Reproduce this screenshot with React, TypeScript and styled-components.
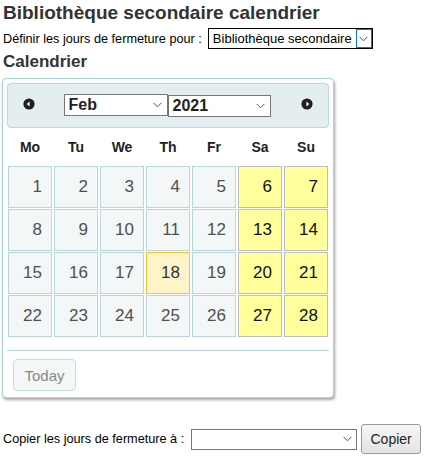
import React from "react";
import styled, { createGlobalStyle } from "styled-components";

const GlobalStyle = createGlobalStyle`
  body {
    margin: 0;
    font-family: "Liberation Sans", Arial, sans-serif;
    color: #333;
    background: #fff;
  }
`;

const Page = styled.div`
  padding: 1px 3px 0 3px;
`;

const Title = styled.h1`
  margin: 0;
  font-size: 19px;
  line-height: 23px;
  font-weight: bold;
  color: #333;
`;

const FormRow = styled.div<{ $top?: number }>`
  display: flex;
  align-items: center;
  margin-top: ${(p) => p.$top ?? 0}px;
  font-size: 12.7px;
  color: #000;
  white-space: nowrap;
`;

const Label = styled.span<{ $gap?: number }>`
  margin-right: ${(p) => p.$gap ?? 4}px;
`;

const FakeSelect = styled.div<{ $width: number; $height: number; $dark?: boolean }>`
  box-sizing: border-box;
  display: flex;
  align-items: stretch;
  flex-shrink: 0;
  width: ${(p) => p.$width}px;
  height: ${(p) => p.$height}px;
  border: 1px solid ${(p) => (p.$dark ? "#000" : "#767676")};
  background: #fff;
  color: #000;
`;

const SelectText = styled.span<{ $bold?: boolean; $size?: number }>`
  flex: 1;
  display: flex;
  align-items: center;
  padding-left: 4px;
  font-size: ${(p) => p.$size ?? 13}px;
  font-weight: ${(p) => (p.$bold ? "bold" : "normal")};
  color: ${(p) => (p.$bold ? "#222" : "#000")};
  white-space: nowrap;
  overflow: hidden;
`;

const ArrowBox = styled.span<{ $focused?: boolean }>`
  box-sizing: border-box;
  width: ${(p) => (p.$focused ? 16 : 18)}px;
  display: flex;
  align-items: center;
  justify-content: center;
  border: ${(p) => (p.$focused ? "1px solid #0078d7" : "none")};
`;

const Chevron = () => (
  <svg width="9" height="6" viewBox="0 0 9 6">
    <path d="M0.5 0.8 L4.5 4.8 L8.5 0.8" fill="none" stroke="#555" strokeWidth="1" />
  </svg>
);

const SubTitle = styled.h2`
  margin: 3px 0 0 0;
  font-size: 17px;
  line-height: 20px;
  font-weight: bold;
  color: #333;
`;

const Picker = styled.div`
  box-sizing: border-box;
  width: 332px;
  margin: 6px 0 0 -1px;
  padding: 4px 4px 6px 4px;
  border: 1px solid #a9d3d8;
  border-radius: 4px;
  background: #fff;
  box-shadow: 1px 2px 3px rgba(0, 0, 0, 0.35);
`;

const Header = styled.div`
  box-sizing: border-box;
  height: 45px;
  display: flex;
  align-items: center;
  padding: 0 15px 0 15px;
  border: 1px solid #b7dade;
  border-radius: 4px;
  background: #e4eef1;
`;

const NavButton = styled.span`
  display: flex;
  width: 12px;
  height: 12px;
  margin-top: -4px;
`;

const SelectGroup = styled.div`
  flex: 1;
  display: flex;
  justify-content: center;
  align-items: flex-start;
  margin-left: -2px;
`;

const YearWrap = styled.div`
  margin-top: 1px;
`;

const NavIcon = ({ dir }: { dir: "prev" | "next" }) => (
  <svg width="12" height="12" viewBox="0 0 12 12">
    <circle cx="6" cy="6" r="5.6" fill="#1f1f1f" />
    {dir === "prev" ? (
      <path d="M3.6 6 L6.6 3.4 L6.6 8.6 Z" fill="#fff" />
    ) : (
      <path d="M8.4 6 L5.4 3.4 L5.4 8.6 Z" fill="#fff" />
    )}
  </svg>
);

const Grid = styled.div`
  display: grid;
  grid-template-columns: repeat(7, 44px);
  column-gap: 2px;
  row-gap: 1px;
  padding: 0 1px;
`;

const DayName = styled.div`
  height: 37px;
  display: flex;
  align-items: center;
  justify-content: center;
  font-size: 14px;
  font-weight: bold;
  color: #222;
`;

type Kind = "normal" | "weekend" | "today";

const Cell = styled.div<{ $kind: Kind }>`
  box-sizing: border-box;
  height: 42px;
  display: flex;
  align-items: center;
  justify-content: flex-end;
  padding-right: 9px;
  font-size: 17px;
  border: 1px solid
    ${(p) =>
      p.$kind === "weekend" ? "#bdbdbd" : p.$kind === "today" ? "#f4c23d" : "#b6d8dc"};
  background: ${(p) =>
    p.$kind === "weekend" ? "#ffff9c" : p.$kind === "today" ? "#fff4c9" : "#f3f7f8"};
  color: ${(p) => (p.$kind === "normal" ? "#4f4f4f" : p.$kind === "today" ? "#333" : "#111")};
`;

const Footer = styled.div`
  margin-top: 13px;
  padding: 8px 0 0 6px;
  border-top: 1px solid #b2d6da;
`;

const TodayButton = styled.button`
  box-sizing: border-box;
  width: 63px;
  height: 32px;
  padding: 0;
  border: 1px solid #c3e0e3;
  border-radius: 4px;
  background: #f3f7f8;
  font-family: "Liberation Sans", Arial, sans-serif;
  font-size: 15px;
  color: #888;
`;

const CopyButton = styled.button`
  box-sizing: border-box;
  width: 61px;
  height: 30px;
  margin-left: 4px;
  padding: 0;
  border: 1px solid #9a9a9a;
  border-radius: 3px;
  background: linear-gradient(#f6f6f6, #e4e4e4);
  font-family: "Liberation Sans", Arial, sans-serif;
  font-size: 14px;
  color: #222;
`;

const dayNames = ["Mo", "Tu", "We", "Th", "Fr", "Sa", "Su"];

const days = Array.from({ length: 28 }, (_, i) => i + 1);

const kindOf = (d: number): Kind => {
  if (d === 18) return "today";
  const col = (d - 1) % 7;
  return col >= 5 ? "weekend" : "normal";
};

export default function App() {
  return (
    <>
      <GlobalStyle />
      <Page>
        <Title>Bibliothèque secondaire calendrier</Title>
        <FormRow $top={4}>
          <Label $gap={6}>Définir les jours de fermeture pour :</Label>
          <FakeSelect $width={165} $height={21} $dark>
            <SelectText>Bibliothèque secondaire</SelectText>
            <ArrowBox $focused>
              <Chevron />
            </ArrowBox>
          </FakeSelect>
        </FormRow>
        <SubTitle>Calendrier</SubTitle>
        <Picker>
          <Header>
            <NavButton>
              <NavIcon dir="prev" />
            </NavButton>
            <SelectGroup>
              <FakeSelect $width={104} $height={22}>
                <SelectText $bold $size={16}>Feb</SelectText>
                <ArrowBox>
                  <Chevron />
                </ArrowBox>
              </FakeSelect>
              <YearWrap>
                <FakeSelect $width={103} $height={22}>
                  <SelectText $bold $size={16}>2021</SelectText>
                  <ArrowBox>
                    <Chevron />
                  </ArrowBox>
                </FakeSelect>
              </YearWrap>
            </SelectGroup>
            <NavButton>
              <NavIcon dir="next" />
            </NavButton>
          </Header>
          <Grid>
            {dayNames.map((n) => (
              <DayName key={n}>{n}</DayName>
            ))}
            {days.map((d) => (
              <Cell key={d} $kind={kindOf(d)}>
                {d}
              </Cell>
            ))}
          </Grid>
          <Footer>
            <TodayButton>Today</TodayButton>
          </Footer>
        </Picker>
        <FormRow $top={26}>
          <Label $gap={7}>Copier les jours de fermeture à :</Label>
          <FakeSelect $width={166} $height={21}>
            <SelectText />
            <ArrowBox>
              <Chevron />
            </ArrowBox>
          </FakeSelect>
          <CopyButton>Copier</CopyButton>
        </FormRow>
      </Page>
    </>
  );
}
